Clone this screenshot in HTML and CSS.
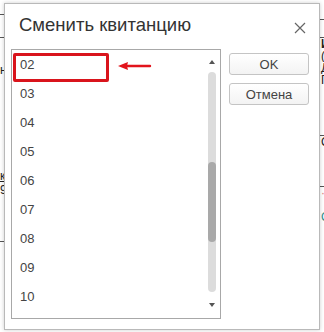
FILE: index.html
```html
<!DOCTYPE html>
<html lang="ru">
<head>
    <meta charset="UTF-8">
    <meta name="viewport" content="width=device-width, initial-scale=1.0">
    <title>Сменить квитанцию</title>
    <link rel="stylesheet" href="styles.css">
</head>
<body>

    <div class="desk">
        <div class="bg-left">
            <div class="bg-row h15 line"></div>
            <div class="bg-row h23 line"></div>
            <div class="bg-row h46 txt">н</div>
            <div class="bg-row h86"></div>
            <div class="bg-row h14 txt u">к</div>
            <div class="bg-row h26 txt">9</div>
            <div class="bg-row h32 line"></div>
        </div>
        <div class="bg-right">
            <div class="bg-row h20 line"></div>
            <div class="bg-row h18 line"></div>
            <div class="bg-row h12 txt b">И</div>
            <div class="bg-row h12 txt">(</div>
            <div class="bg-row h12 txt u">Д</div>
            <div class="bg-row h12 txt">Г</div>
            <div class="bg-row h50 line"></div>
            <div class="bg-row h24 txt">С</div>
            <div class="bg-row h27 line"></div>
            <div class="bg-row h24 txt pink">·</div>
            <div class="bg-row h14 txt teal">С</div>
        </div>
    </div>

    <div class="dialog">
        <div class="dialog-head">
            <div class="dialog-title">Сменить квитанцию</div>
            <svg class="close" width="12" height="12" viewBox="0 0 12 12">
                <path d="M1 1 L11 11 M11 1 L1 11" stroke="#666" stroke-width="1.2" fill="none"/>
            </svg>
        </div>

        <div class="dialog-body">
            <div class="list">
                <div class="items">
                    <div class="item">02</div>
                    <div class="item">03</div>
                    <div class="item">04</div>
                    <div class="item">05</div>
                    <div class="item">06</div>
                    <div class="item">07</div>
                    <div class="item">08</div>
                    <div class="item">09</div>
                    <div class="item">10</div>
                </div>
                <div class="scroll">
                    <span class="arrow up"></span>
                    <div class="track">
                        <div class="thumb"></div>
                    </div>
                    <span class="arrow down"></span>
                </div>

                <!-- пометка на скриншоте -->
                <div class="mark"></div>
                <svg class="pointer" width="36" height="10" viewBox="0 0 36 10">
                    <path d="M33 5 L9 5" stroke="#e2141c" stroke-width="2.4" stroke-linecap="round"/>
                    <path d="M1 5 L11 1 L10 5 L11 9 Z" fill="#e2141c"/>
                </svg>
            </div>

            <div class="buttons">
                <button class="btn">OK</button>
                <button class="btn">Отмена</button>
            </div>
        </div>
    </div>

</body>
</html>
```

FILE: styles.css
```css
body {
    font-family: "Liberation Sans", Arial, sans-serif;
    margin: 0;
    padding: 0;
    background: #ffffff;
    color: #333;
    width: 324px;
    height: 332px;
    overflow: hidden;
    position: relative;
}

/* page behind the dialog */
.desk {
    display: flex;
    justify-content: space-between;
    height: 332px;
}
.bg-left {
    width: 30px;
}
.bg-right {
    width: 24px;
}
.bg-row {
    box-sizing: border-box;
    font-size: 12px;
    color: #222;
    line-height: 12px;
    overflow: hidden;
}
.bg-left .txt {
    text-align: right;
    padding-right: 26px;
}
.bg-right .txt {
    padding-left: 21px;
}
.line {
    border-bottom: 1px solid #555;
}
.u {
    text-decoration: underline;
}
.b {
    font-weight: bold;
}
.pink {
    color: #e08080;
}
.teal {
    color: #2a8f8f;
}
.h12 { height: 12px; }
.h14 { height: 14px; }
.h15 { height: 15px; }
.h18 { height: 18px; }
.h20 { height: 20px; }
.h23 { height: 23px; }
.h24 { height: 24px; }
.h26 { height: 26px; }
.h27 { height: 27px; }
.h32 { height: 32px; }
.h46 { height: 46px; padding-top: 26px; }
.h50 { height: 50px; }
.h86 { height: 86px; }

/* dialog */
.dialog {
    position: absolute;
    left: 4px;
    top: 3px;
    width: 316px;
    height: 327px;
    box-sizing: border-box;
    background: #fff;
    border: 1px solid #b9b9b9;
    box-shadow: 0 0 4px rgba(0, 0, 0, 0.2);
}
.dialog-head {
    display: flex;
    justify-content: space-between;
    align-items: flex-start;
    height: 45px;
    box-sizing: border-box;
    padding: 9px 13px 0 14px;
}
.dialog-title {
    font-size: 18.5px;
    line-height: 24px;
    color: #333;
}
.close {
    margin-top: 9px;
}
.dialog-body {
    display: flex;
    align-items: flex-start;
    gap: 8px;
    padding-left: 6px;
}

/* list */
.list {
    position: relative;
    display: flex;
    width: 210px;
    height: 270px;
    box-sizing: border-box;
    border: 1px solid #a8a8a8;
}
.items {
    flex: 1;
}
.item {
    height: 29px;
    line-height: 29px;
    padding-left: 8px;
    font-size: 13px;
    color: #444;
}
.scroll {
    width: 14px;
    margin-right: 1px;
    display: flex;
    flex-direction: column;
    align-items: center;
    padding-top: 10px;
}
.arrow {
    width: 0;
    height: 0;
    border-left: 3px solid transparent;
    border-right: 3px solid transparent;
}
.arrow.up {
    border-bottom: 4px solid #555;
}
.arrow.down {
    border-top: 4px solid #555;
    margin-top: 11px;
}
.track {
    width: 8px;
    height: 220px;
    margin-top: 8px;
    background: #dcdcdc;
    border-radius: 4px;
    padding-top: 90px;
    box-sizing: border-box;
}
.thumb {
    height: 80px;
    background: #a9a9a9;
    border-radius: 4px;
}
.mark {
    position: absolute;
    left: 1px;
    top: 3px;
    width: 96px;
    height: 29px;
    box-sizing: border-box;
    border: 3px solid #d9141c;
    border-radius: 2px;
}
.pointer {
    position: absolute;
    left: 105px;
    top: 11px;
}

/* buttons */
.buttons {
    display: flex;
    flex-direction: column;
    gap: 8px;
    margin-top: 4px;
}
.btn {
    width: 80px;
    height: 22px;
    padding: 0;
    font-family: "Liberation Sans", Arial, sans-serif;
    font-size: 13px;
    color: #444;
    background: linear-gradient(#ffffff, #f3f3f3);
    border: 1px solid #c4c4c4;
    border-radius: 3px;
}
```
